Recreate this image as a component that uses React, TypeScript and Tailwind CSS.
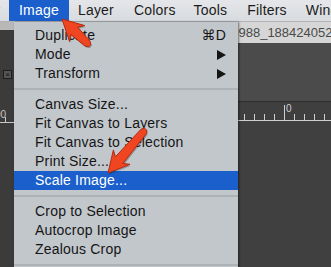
import React from "react";

type Row =
  | { kind: "item"; label: string; shortcut?: string; submenu?: boolean; active?: boolean }
  | { kind: "sep" };

const rows: Row[] = [
  { kind: "item", label: "Duplicate", shortcut: "⌘D" },
  { kind: "item", label: "Mode", submenu: true },
  { kind: "item", label: "Transform", submenu: true },
  { kind: "sep" },
  { kind: "item", label: "Canvas Size..." },
  { kind: "item", label: "Fit Canvas to Layers" },
  { kind: "item", label: "Fit Canvas to Selection" },
  { kind: "item", label: "Print Size..." },
  { kind: "item", label: "Scale Image...", active: true },
  { kind: "sep" },
  { kind: "item", label: "Crop to Selection" },
  { kind: "item", label: "Autocrop Image" },
  { kind: "item", label: "Zealous Crop" },
  { kind: "sep" },
  { kind: "item", label: "Guillotine" },
];

const font = { fontFamily: '"Liberation Sans", "DejaVu Sans", sans-serif' };

// red skitch-style arrow, tip -> tail
const Arrow = ({ tip, tail }: { tip: [number, number]; tail: [number, number] }) => {
  const dx = tail[0] - tip[0];
  const dy = tail[1] - tip[1];
  const len = Math.hypot(dx, dy);
  const ux = dx / len;
  const uy = dy / len;
  const px = -uy;
  const py = ux;
  const p = (u: number, v: number) =>
    `${(tip[0] + ux * u + px * v).toFixed(1)},${(tip[1] + uy * u + py * v).toFixed(1)}`;
  const pts = [
    p(0, 0),
    p(21, 11),
    p(17, 5),
    p(len - 2, 3.5),
    p(len + 1, 1.5),
    p(len + 1, -1.5),
    p(len - 2, -3.5),
    p(17, -5),
    p(21, -11),
  ].join(" ");
  return (
    <g>
      <polygon points={pts} fill="#000" opacity="0.25" transform="translate(1,1.5)" />
      <polygon points={pts} fill="#ef4521" stroke="#b32a10" strokeWidth="1" strokeLinejoin="round" />
    </g>
  );
};

const App = () => {
  return (
    <div className="relative w-[331px] h-[267px] overflow-hidden bg-[#404040]" style={font}>
      {/* menu bar */}
      <div className="flex h-[22px] items-stretch bg-gradient-to-b from-[#e4e6e9] to-[#d8dbdf] border-b border-[#b3b3b3] text-[14px] text-[#1b1b1b] tracking-[0.2px]">
        <div className="w-[14px] overflow-hidden flex items-center justify-end pr-[9px]">w</div>
        <div className="flex items-center bg-[#1a5fcc] text-white px-[10px]">Image</div>
        <div className="flex items-center pl-[9px]">Layer</div>
        <div className="flex items-center pl-[20px]">Colors</div>
        <div className="flex items-center pl-[18px]">Tools</div>
        <div className="flex items-center pl-[20px]">Filters</div>
        <div className="flex items-center pl-[19px] whitespace-nowrap">Windows</div>
      </div>

      {/* windows behind the menu */}
      <div className="flex h-[245px]">
        <div className="w-[14px] flex flex-col bg-[#3b3b3b]">
          <div className="h-[8px] bg-[#b8b8b8]" />
          <div className="h-[40px]" />
          <div className="mx-[3px] w-[9px] h-[9px] border border-[#1e1e1e] bg-[#555] text-[#111] text-[8px] leading-[7px] text-center">
            ×
          </div>
          <div className="h-[26px]" />
          <div className="h-[18px] border-b border-[#c8c8c8] relative">
            <span className="absolute -left-[5px] top-[2px] text-[10px] text-[#c8c8c8]">00</span>
            <span className="absolute left-[5px] bottom-0 w-px h-[5px] bg-[#c8c8c8]" />
          </div>
        </div>
        <div className="flex-1 flex flex-col">
          <div className="h-[21px] bg-[#d6d6d6] flex items-center text-[13px] text-[#4a4a4a] whitespace-nowrap overflow-hidden pl-[210px]">
            _0988_188424052
          </div>
          <div className="h-[59px] bg-[#4b4b4b] border-b border-[#2e2e2e]" />
          <div className="h-[19px] bg-[#3f3f3f] border-b border-[#cfcfcf] flex items-end pl-[230px] gap-[9px]">
            {[0, 1, 2, 3, 4, 5, 6, 7, 8].map((i) => (
              <div key={i} className={`relative w-px bg-[#cfcfcf] ${i === 4 ? "h-[15px]" : "h-[6px]"}`}>
                {i === 4 && (
                  <span className="absolute left-[2px] -top-[1px] text-[10px] leading-none text-[#cfcfcf]">0</span>
                )}
              </div>
            ))}
          </div>
          <div className="flex-1 bg-[#404040]" />
        </div>
      </div>

      {/* dropdown menu */}
      <div className="absolute left-[14px] top-[22px] w-[224px] h-[250px] bg-[#c2c7cc] pt-[4px] text-[14px] text-[#151515] tracking-[0.2px] shadow-[1px_0_2px_rgba(0,0,0,0.5)]">
        {rows.map((r, i) =>
          r.kind === "sep" ? (
            <div key={i} className="h-[12px] flex items-center">
              <div className="w-full h-[2px] bg-[#adb2b7]" />
            </div>
          ) : (
            <div
              key={i}
              className={`h-[19px] flex items-center justify-between pl-[21px] pr-[12px] ${
                r.active ? "bg-[#1a5fcc] text-white" : ""
              }`}
            >
              <span>{r.label}</span>
              {r.shortcut && <span>{r.shortcut}</span>}
              {r.submenu && (
                <svg width="9" height="10" viewBox="0 0 9 10">
                  <polygon points="0,0 9,5 0,10" fill="#151515" />
                </svg>
              )}
            </div>
          )
        )}
      </div>

      {/* annotation arrows */}
      <svg className="absolute left-0 top-0" width="331" height="267" viewBox="0 0 331 267">
        <Arrow tip={[62, 19]} tail={[89, 45]} />
        <Arrow tip={[108, 173]} tail={[145, 130]} />
      </svg>
    </div>
  );
};

export default App;
